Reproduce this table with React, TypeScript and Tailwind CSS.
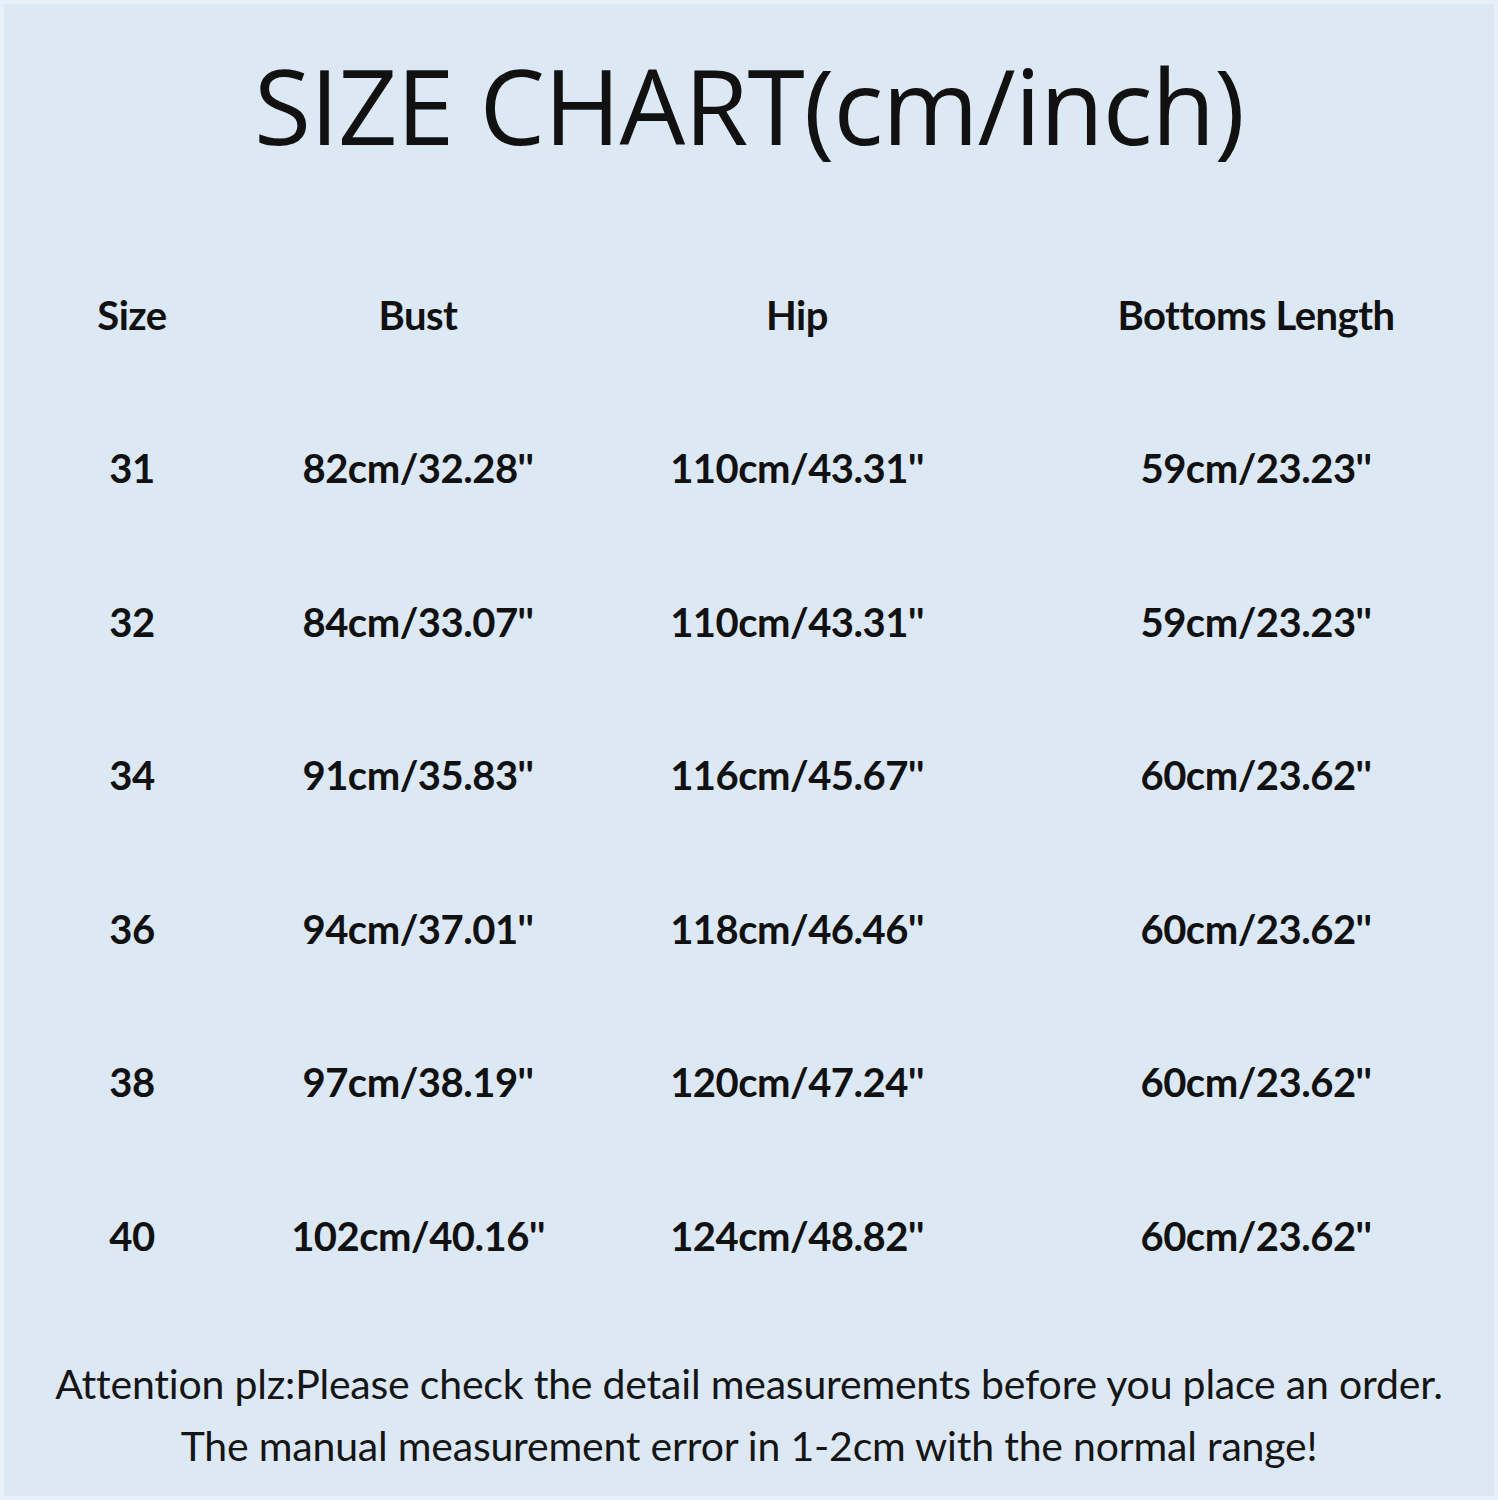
import React from "react";

const rows = [
  ["31", "82cm/32.28''", "110cm/43.31''", "59cm/23.23''"],
  ["32", "84cm/33.07''", "110cm/43.31''", "59cm/23.23''"],
  ["34", "91cm/35.83''", "116cm/45.67''", "60cm/23.62''"],
  ["36", "94cm/37.01''", "118cm/46.46''", "60cm/23.62''"],
  ["38", "97cm/38.19''", "120cm/47.24''", "60cm/23.62''"],
  ["40", "102cm/40.16''", "124cm/48.82''", "60cm/23.62''"],
];

const headers = ["Size", "Bust", "Hip", "Bottoms Length"];

export default function App() {
  return (
    <div className="w-[1498px] h-[1500px] bg-[#e7f0f9] p-[4px]">
      <div className="w-full h-full bg-[#dce8f4] flex flex-col text-[#111111]">
        <div className="h-[234px] flex justify-center pt-[31px]">
          <h1 className="text-[104px] leading-[140px] tracking-[-1px] font-['Open_Sans',sans-serif] font-normal">
            SIZE CHART(cm/inch)
          </h1>
        </div>
        <div className="grid grid-cols-[256px_316px_442px_476px] font-['Lato',sans-serif] font-bold text-[40px]">
          {headers.map((h) => (
            <div key={h} className="h-[153.5px] flex items-center justify-center tracking-[-0.5px]">
              {h}
            </div>
          ))}
          {rows.map((r) =>
            r.map((c, i) => (
              <div key={r[0] + i} className="h-[153.5px] flex items-center justify-center tracking-[-0.5px]">
                {c}
              </div>
            ))
          )}
        </div>
        <div className="flex flex-col items-center pt-[40px] font-['Lato',sans-serif] text-[41px] leading-[62px] tracking-[-0.2px] text-[#151515]">
          <p>Attention plz:Please check the detail measurements before you place an order.</p>
          <p>The manual measurement error in 1-2cm with the normal range!</p>
        </div>
      </div>
    </div>
  );
}
